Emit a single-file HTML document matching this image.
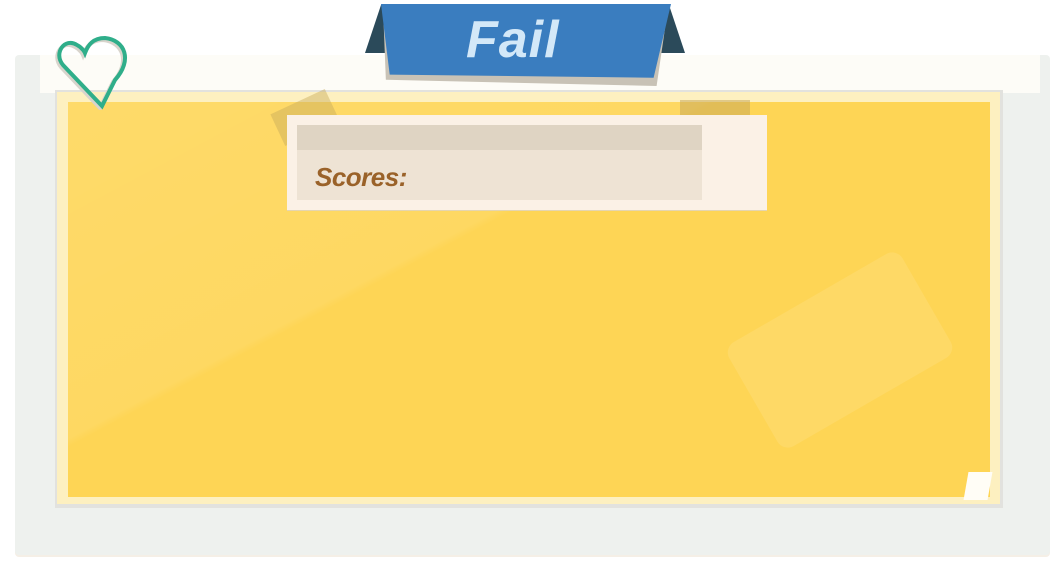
<!DOCTYPE html>
<html><head><style>
html,body{margin:0;padding:0;width:1061px;height:570px;background:#fff;overflow:hidden;position:relative;font-family:"Liberation Sans",sans-serif}
div{position:absolute}
</style></head><body>
<div style="left:15px;top:55px;width:1035px;height:500px;background:#eef1ee;border-radius:4px;box-shadow:0 2px 0 #f5efe6"></div>
<div style="left:40px;top:55px;width:1000px;height:38px;background:#fdfcf7"></div>
<div style="left:55px;top:90px;width:948px;height:418px;background:#e2e2de"></div>
<div style="left:57px;top:92px;width:943px;height:412px;background:#fdf0c0"></div>
<div style="left:68px;top:102px;width:922px;height:395px;background:#fed555"></div>
<div style="left:68px;top:102px;width:922px;height:395px;background:linear-gradient(152deg,rgba(255,255,255,0.12) 0%,rgba(255,255,255,0.08) 38%,rgba(255,255,255,0) 39%)"></div>
<div style="left:740px;top:290px;width:200px;height:120px;background:rgba(255,255,255,0.1);transform:rotate(-30deg);border-radius:12px"></div>
<div style="left:966px;top:472px;width:24px;height:28px;background:#fffdf6;transform:skewX(-10deg)"></div>
<!-- tapes -->
<div style="left:275px;top:100px;width:60px;height:35px;background:rgba(200,170,90,0.45);transform:rotate(-25deg)"></div>
<div style="left:680px;top:100px;width:70px;height:22px;background:rgba(200,170,90,0.55)"></div>
<!-- score card -->
<div style="left:287px;top:115px;width:480px;height:95px;background:#fbf1e6;box-shadow:0 1px 0 #e5d5b0"></div>
<div style="left:297px;top:125px;width:405px;height:75px;background:#eee3d4"></div>
<div style="left:297px;top:125px;width:405px;height:25px;background:#dfd4c3"></div>
<div style="left:315px;top:162px;font-size:26px;font-weight:bold;font-style:italic;color:#9a6229;letter-spacing:-0.5px">Scores:</div>
<!-- banner -->
<div style="left:365px;top:5px;width:320px;height:48px;background:#2b4a5a;clip-path:polygon(5% 0,95% 0,100% 100%,0 100%)"></div>
<div style="left:383px;top:8px;width:285px;height:78px;background:#c8c2b6;clip-path:polygon(0 0,100% 0,96% 100%,1% 92%)"></div>
<div style="left:381px;top:4px;width:290px;height:76px;background:#3a7dbf;clip-path:polygon(0 0,100% 0,94% 97%,3% 93%)"></div>
<div style="left:466px;top:10px;font-size:52px;font-weight:bold;font-style:italic;color:#d3e8f8;letter-spacing:1px">Fail</div>
<!-- heart -->
<svg style="position:absolute;left:55px;top:35px" width="85" height="75" viewBox="0 0 85 75">
<path d="M47 71 L8 30 C-2 18 10 2 22 10 C28 13 30 18 30 18 C33 10 38 3 50 3 C70 5 78 25 60 45 Z" fill="none" stroke="#d8d4cc" stroke-width="4" transform="translate(-2,2)"/>
<path d="M47 71 L8 30 C-2 18 10 2 22 10 C28 13 30 18 30 18 C33 10 38 3 50 3 C70 5 78 25 60 45 Z" fill="none" stroke="#2fae8a" stroke-width="4"/>
</svg>
</body></html>
